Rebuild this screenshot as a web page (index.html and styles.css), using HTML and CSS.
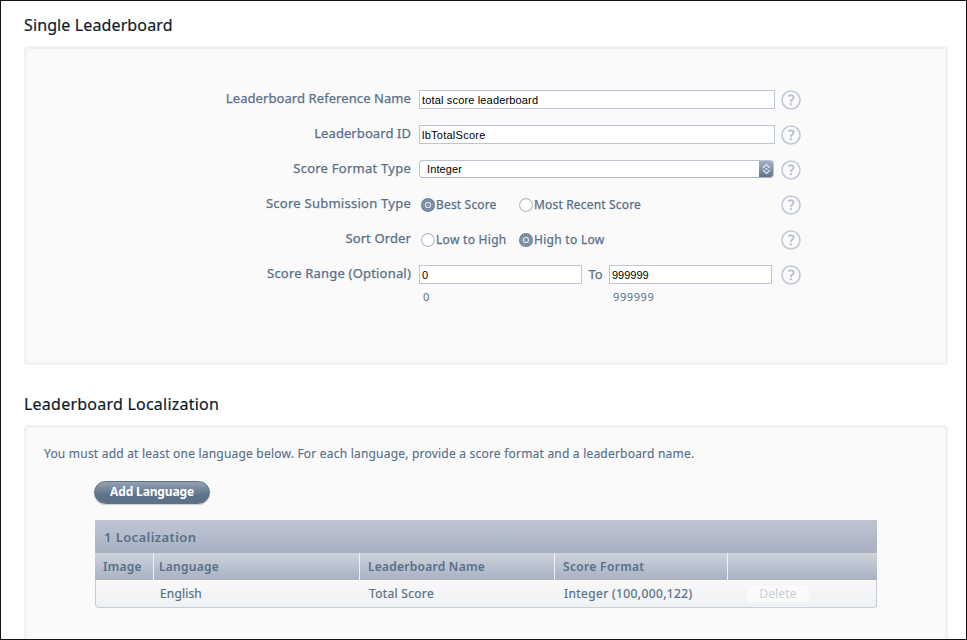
FILE: index.html
```html
<!DOCTYPE html>
<html lang="en">
<head>
<meta charset="utf-8">
<title>Single Leaderboard</title>
<link rel="stylesheet" href="styles.css">
</head>
<body>
<svg width="0" height="0" class="defs">
  <defs>
    <linearGradient id="steel" x1="0" y1="0" x2="0" y2="1"><stop offset="0" stop-color="#a3afbf"/><stop offset=".3" stop-color="#97a4b5"/><stop offset="1" stop-color="#5b6f84"/></linearGradient>
    <symbol id="help" viewBox="0 0 20 20">
      <circle cx="10" cy="10" r="9" fill="#fafafa" stroke="#c3c9d5" stroke-width="1.7"/>
      <path d="M7.300 6.200C8 5.700 8.900 5.400 9.900 5.400c1.600 0 2.700.8 2.700 2.100C12.600 9.500 9.800 9.500 9.800 11.900" fill="none" stroke="#b6bdcc" stroke-width="1.7"/>
      <rect x="8.800" y="13.200" width="2" height="1.900" fill="#b6bdcc"/>
    </symbol>
    <symbol id="radio-on" viewBox="0 0 14 14">
      <circle cx="7" cy="7" r="7" fill="#6b7f95"/>
      <circle cx="7" cy="7" r="5" fill="none" stroke="#9aaabb" stroke-width="1.600" stroke-dasharray="1 1"/>
      <circle cx="7" cy="7" r="2.700" fill="#8092a5" stroke="#dbe1e8" stroke-width="1.200"/>
    </symbol>
    <symbol id="radio-off" viewBox="0 0 14 14">
      <circle cx="7" cy="7" r="6.400" fill="#fff" stroke="#b4bccb" stroke-width="1.100"/>
    </symbol>
  </defs>
</svg>
<main class="frame">
  <h2 class="title title-single">Single Leaderboard</h2>
  <section class="panel settings">
    <div class="row">
      <span class="label l-ref">Leaderboard Reference Name</span>
      <div class="field"><div class="input wide i-name">total score leaderboard</div></div>
      <svg class="help"><use href="#help"/></svg>
    </div>
    <div class="row">
      <span class="label l-ref">Leaderboard ID</span>
      <div class="field"><div class="input wide i-id">lbTotalScore</div></div>
      <svg class="help"><use href="#help"/></svg>
    </div>
    <div class="row">
      <span class="label l-score">Score Format Type</span>
      <div class="field"><div class="select"><span>Integer</span>
        <svg class="stepper" viewBox="0 0 15 18"><rect width="15" height="18" fill="url(#steel)"/><path d="M4 8 7.500 4.500 11 8M4 10l3.500 3.500L11 10" fill="none" stroke="#e4e8ee" stroke-width="1.200"/><circle cx="7.500" cy="9" r="1" fill="#e4e8ee"/></svg>
      </div></div>
      <svg class="help"><use href="#help"/></svg>
    </div>
    <div class="row">
      <span class="label l-score">Score Submission Type</span>
      <div class="field radios">
        <span class="radio"><svg><use href="#radio-on"/></svg><span class="r-submit">Best Score</span></span>
        <span class="radio"><svg><use href="#radio-off"/></svg><span class="r-submit">Most Recent Score</span></span>
      </div>
      <svg class="help"><use href="#help"/></svg>
    </div>
    <div class="row">
      <span class="label l-sort">Sort Order</span>
      <div class="field radios">
        <span class="radio"><svg><use href="#radio-off"/></svg><span class="r-sort">Low to High</span></span>
        <span class="radio"><svg><use href="#radio-on"/></svg><span class="r-sort">High to Low</span></span>
      </div>
      <svg class="help"><use href="#help"/></svg>
    </div>
    <div class="row">
      <span class="label l-range">Score Range (Optional)</span>
      <div class="field"><div class="input half">0</div><span class="to">To</span><div class="input half">999999</div></div>
      <svg class="help"><use href="#help"/></svg>
    </div>
    <div class="hints"><span>0</span><span>999999</span></div>
  </section>
  <h2 class="title title-local">Leaderboard Localization</h2>
  <section class="panel localization">
    <p class="note">You must add at least one language below. For each language, provide a score format and a leaderboard name.</p>
    <div class="add"><span>Add Language</span></div>
    <div class="table">
      <div class="caption"><span>1 Localization</span></div>
      <div class="cells head">
        <div>Image</div><div>Language</div><div>Leaderboard Name</div><div class="h-format">Score Format</div><div></div>
      </div>
      <div class="cells body">
        <div></div><div>English</div><div class="b-name">Total Score</div><div class="b-format">Integer (100,000,122)</div><div><span class="delete">Delete</span></div>
      </div>
    </div>
  </section>
</main>
</body>
</html>
```
FILE: styles.css
```css
* { box-sizing: border-box; }
body { margin: 0; background: #fff; font-family: "Noto Sans", sans-serif; color: #587087; }
.defs { display: block; width: 0; height: 0; }
.frame { width: 967px; height: 640px; border: 1px solid #171315; overflow: hidden; padding: 0 18px 0 23px; }
.title { margin: 0; font-size: 16px; font-weight: 400; line-height: 22px; color: #0e1b28; white-space: nowrap; -webkit-text-stroke: .2px; }
.title-single { margin-top: 13px; letter-spacing: .12px; }
.title-local { margin-top: 28px; letter-spacing: .23px; }
.panel { border: 3px solid #f1f2f4; border-top-color: #f1f1f2; border-radius: 4px; background: #fafafa; }
.settings { height: 319px; margin-top: 10px; padding-top: 33px; }
.row { display: grid; grid-template-columns: 384px 356px 20px; column-gap: 6px; height: 35px; align-items: center; }
.row .field { margin-left: 2px; }
.label { justify-self: end; font-size: 13px; line-height: 18px; white-space: nowrap; margin-top: -3px; -webkit-text-stroke: .25px; }
.l-ref { letter-spacing: .08px; }
.l-score { letter-spacing: .25px; }
.l-sort { letter-spacing: .12px; }
.l-range { letter-spacing: .19px; }
.field { display: flex; align-items: center; width: 356px; height: 20px; }
.input { height: 19px; border: 1px solid #bcc5d6; background: #fff; padding-left: 2px; font: 11px/19px "Liberation Sans", sans-serif; color: #000; white-space: nowrap; }
.wide { width: 356px; }
.half { width: 163px; }
.i-name { letter-spacing: .16px; }
.i-id { letter-spacing: .25px; }
.to { width: 27px; text-align: center; font-size: 13px; margin-top: -2px; -webkit-text-stroke: .25px; }
.select { display: flex; justify-content: space-between; width: 355px; height: 18px; margin-top: -2px; border: 1px solid #bcc3d2; border-bottom-color: #a9b3c4; border-radius: 4px; background: #fff; overflow: hidden; padding-left: 7px; font: 11px/17px "Liberation Sans", sans-serif; letter-spacing: .12px; color: #000; }
.stepper { width: 15px; height: 18px; margin: -1px -1px 0 0; }
.help { display: block; width: 20px; height: 20px; margin-left: 2px; }
.radios { padding-left: 2px; }
.radio { display: flex; align-items: center; gap: 1px; width: 98px; font-size: 12px; line-height: 18px; white-space: nowrap; -webkit-text-stroke: .25px; }
.radio svg { flex: none; width: 14px; height: 14px; }
.r-submit { letter-spacing: .17px; }
.r-sort { letter-spacing: .29px; }
.hints { display: flex; padding-left: 396px; font-size: 11px; line-height: 16px; margin-top: -3px; letter-spacing: .6px; }
.hints span { width: 190px; }
.localization { height: 230px; margin-top: 10px; }
.note { margin: 17px 0 0 17px; font-size: 12px; line-height: 18px; letter-spacing: .21px; white-space: nowrap; -webkit-text-stroke: .15px; }
.add { width: 116px; height: 23px; margin: 18px 0 0 67px; border-radius: 12px; background: linear-gradient(#93a1b3, #5d7187 65%); border: 1px solid #5e7287; color: #fff; font-size: 12px; font-weight: 700; line-height: 20px; letter-spacing: -.15px; text-align: center; white-space: nowrap; box-shadow: 0 1px 1px #c9ced8; }
.table { width: 782px; margin: 16px 0 0 68px; }
.caption { height: 33px; padding-left: 9px; background: linear-gradient(#bdc5d2, #b5bdcd 45%, #a7b0c0); font-size: 13px; font-weight: 600; line-height: 34px; letter-spacing: .42px; }
.cells { display: grid; grid-template-columns: 59px 206px 195px 173px 149px; white-space: nowrap; font-size: 12px; }
.head { height: 27px; background: linear-gradient(#d0d4db, #b8c0cf 55%, #a9b2c2); font-weight: 600; line-height: 27px; letter-spacing: .25px; }
.head > div { padding-left: 8px; border-right: 1px solid #eef0f4; }
.head > div:nth-child(2) { padding-left: 5px; }
.head > div:last-child { border-right: 0; }
.head .h-format { letter-spacing: .33px; }
.body { height: 28px; border: 1px solid #c6cdd8; border-top: 0; border-radius: 0 0 4px 4px; background: linear-gradient(#f8f8f9, #eff1f3); line-height: 27px; letter-spacing: .15px; -webkit-text-stroke: .2px; }
.body > div { padding-left: 8px; }
.body > div:nth-child(2) { padding-left: 5px; }
.body .b-name { letter-spacing: .32px; }
.body .b-format { letter-spacing: .4px; }
.delete { display: block; width: 64px; height: 19px; margin: 4px 0 0 9px; border: 1px solid #f1f3f5; border-radius: 3px; background: #fafafb; color: #c9ced9; line-height: 17px; text-align: center; font-size: 12px; -webkit-text-stroke: 0; }
```
